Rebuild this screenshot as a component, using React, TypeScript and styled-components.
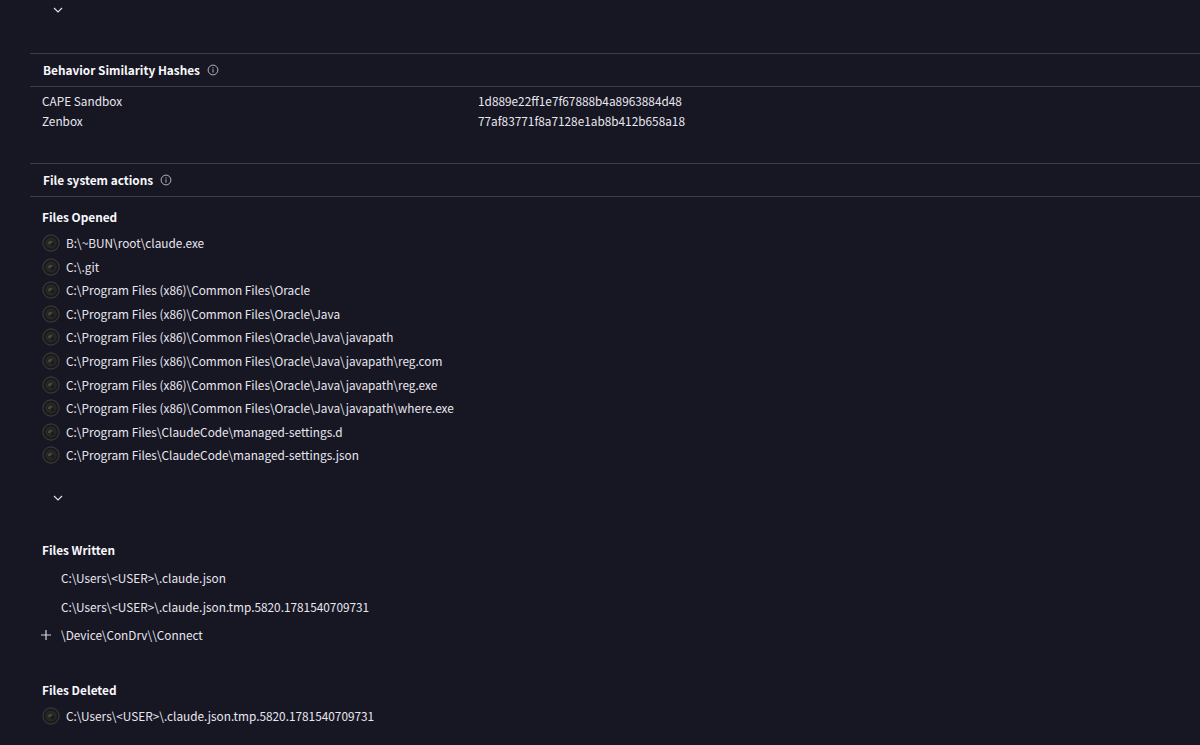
import React from "react";
import styled, { createGlobalStyle } from "styled-components";

const GlobalStyle = createGlobalStyle`
  * { box-sizing: border-box; }
  body {
    margin: 0;
    background: #171623;
    color: #e8e7ee;
    font-family: "Noto Sans CJK SC", "Noto Sans", sans-serif;
    font-size: 11.82px;
    line-height: 20px;
    overflow: hidden;
  }
`;

const Page = styled.main`
  height: 745px;
  padding-left: 30px;
  overflow: hidden;
`;

const MoreRow = styled.div<{ $height: number; $top: number }>`
  height: ${(p) => p.$height}px;
  padding: ${(p) => p.$top}px 0 0 23px;
  svg { display: block; }
`;

const SectionHeader = styled.header`
  display: flex;
  align-items: center;
  gap: 7px;
  height: 34px;
  padding-left: 13px;
  border-top: 1px solid #3d3c4b;
  border-bottom: 1px solid #3d3c4b;
`;

const Title = styled.h2`
  margin: 0;
  font-size: 11.82px;
  font-weight: 700;
  color: #f9f9fc;
  white-space: nowrap;
`;

const HashTable = styled.dl`
  display: grid;
  grid-template-columns: 436px 1fr;
  grid-auto-rows: 20px;
  height: 76px;
  margin: 0;
  padding: 4px 0 0 12px;
  dd, dt { margin: 0; }
`;

const GroupTitle = styled.h3<{ $height: number }>`
  margin: 0;
  padding-left: 12px;
  height: ${(p) => p.$height}px;
  line-height: 24px;
  font-size: 11.82px;
  font-weight: 700;
  color: #f9f9fc;
`;

const OpenedTop = styled.div`
  padding-top: 8px;
`;

const List = styled.ul`
  list-style: none;
  margin: 0;
  padding: 0 0 0 12px;
`;

const BadgeItem = styled.li`
  display: flex;
  align-items: center;
  gap: 6px;
  height: 23.6px;
  white-space: nowrap;
  svg { flex: none; }
`;

const TreeItem = styled.li`
  display: grid;
  grid-template-columns: 19px 1fr;
  align-items: center;
  height: 28.6px;
  white-space: nowrap;
  svg { margin-left: -2px; }
`;

const DeletedGroup = styled.section`
  padding-top: 28px;
`;

const Chevron = () => (
  <svg width="10" height="6" viewBox="0 0 10 6" fill="none" stroke="#e4e3ea" strokeWidth="1.1">
    <path d="M1 1l4 4 4-4" />
  </svg>
);

const Info = () => (
  <svg width="12" height="12" viewBox="0 0 12 12" fill="none" stroke="#b9b8c2" strokeWidth="0.95">
    <circle cx="6" cy="6" r="4.9" />
    <path d="M6 5.3v3.3M6 3.3v1.1" />
  </svg>
);

const Plus = () => (
  <svg width="12" height="12" viewBox="0 0 12 12" stroke="#d8d7df" strokeWidth="1.2">
    <path d="M6 1v10M1 6h10" />
  </svg>
);

const Badge = () => (
  <svg width="18" height="18" viewBox="0 0 18 18" fill="none">
    <circle cx="9" cy="9" r="8.1" fill="#19191d" stroke="#3a3b38" strokeWidth="1.1" />
    <circle cx="9" cy="9" r="5.8" fill="#262724" />
    <path d="M5.9 10C5.9 6.9 9.3 6.1 11.2 8.2 9.5 8 8.6 9 8.7 10.6 7.7 9.6 6.8 9.5 5.9 10Z" fill="#484a45" />
    <circle cx="10.5" cy="10.4" r="1.8" fill="#1a1b1a" />
  </svg>
);

const hashes = [
  ["CAPE Sandbox", "1d889e22ff1e7f67888b4a8963884d48"],
  ["Zenbox", "77af83771f8a7128e1ab8b412b658a18"],
];

const opened = [
  "B:\\~BUN\\root\\claude.exe",
  "C:\\.git",
  "C:\\Program Files (x86)\\Common Files\\Oracle",
  "C:\\Program Files (x86)\\Common Files\\Oracle\\Java",
  "C:\\Program Files (x86)\\Common Files\\Oracle\\Java\\javapath",
  "C:\\Program Files (x86)\\Common Files\\Oracle\\Java\\javapath\\reg.com",
  "C:\\Program Files (x86)\\Common Files\\Oracle\\Java\\javapath\\reg.exe",
  "C:\\Program Files (x86)\\Common Files\\Oracle\\Java\\javapath\\where.exe",
  "C:\\Program Files\\ClaudeCode\\managed-settings.d",
  "C:\\Program Files\\ClaudeCode\\managed-settings.json",
];

const written = [
  { path: "C:\\Users\\<USER>\\.claude.json", expandable: false },
  { path: "C:\\Users\\<USER>\\.claude.json.tmp.5820.1781540709731", expandable: false },
  { path: "\\Device\\ConDrv\\\\Connect", expandable: true },
];

const deleted = ["C:\\Users\\<USER>\\.claude.json.tmp.5820.1781540709731"];

export default function App() {
  return (
    <Page>
      <GlobalStyle />
      <MoreRow $height={53} $top={7}><Chevron /></MoreRow>
      <SectionHeader><Title>Behavior Similarity Hashes</Title><Info /></SectionHeader>
      <HashTable>
        {hashes.map(([name, hash]) => (
          <React.Fragment key={name}><dt>{name}</dt><dd>{hash}</dd></React.Fragment>
        ))}
      </HashTable>
      <SectionHeader><Title>File system actions</Title><Info /></SectionHeader>
      <OpenedTop>
        <GroupTitle $height={26.3}>Files Opened</GroupTitle>
        <List>{opened.map((p) => <BadgeItem key={p}><Badge />{p}</BadgeItem>)}</List>
      </OpenedTop>
      <MoreRow $height={70.7} $top={27.7}><Chevron /></MoreRow>
      <GroupTitle $height={26}>Files Written</GroupTitle>
      <List>
        {written.map((f) => (
          <TreeItem key={f.path}>{f.expandable ? <Plus /> : <span />}<span>{f.path}</span></TreeItem>
        ))}
      </List>
      <DeletedGroup>
        <GroupTitle $height={26}>Files Deleted</GroupTitle>
        <List>{deleted.map((p) => <BadgeItem key={p}><Badge />{p}</BadgeItem>)}</List>
      </DeletedGroup>
    </Page>
  );
}
